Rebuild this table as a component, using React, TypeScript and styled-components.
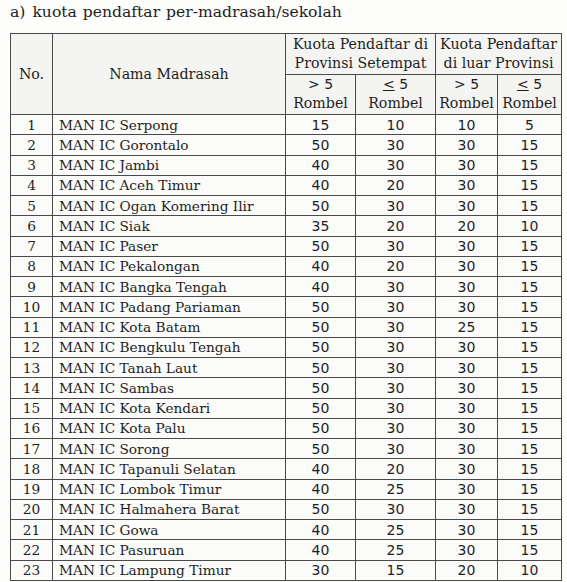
import { FC } from "react";
import styled, { createGlobalStyle } from "styled-components";

const GlobalStyle = createGlobalStyle`
  html, body {
    margin: 0;
    padding: 0;
    background: #fdfdfc;
  }
`;

const Page = styled.div`
  width: 567px;
  height: 582px;
  padding: 3px 0 0 10px;
  box-sizing: border-box;
  font-family: "DejaVu Serif", "Liberation Serif", serif;
  color: #1e1e1e;
`;

const Title = styled.div`
  font-family: "DejaVu Serif", "Liberation Serif", serif;
  font-size: 15.6px;
  line-height: 18px;
  height: 30px;
  word-spacing: 1px;
`;

const Label = styled.span`
  margin-right: 7px;
`;

const Table = styled.table`
  border-collapse: collapse;
  table-layout: fixed;
  width: 551px;
  font-size: 13.7px;
  background: #fbfbfa;
`;

const Cell = styled.td<{ $align?: "left" | "center"; $num?: boolean }>`
  border: 1.3px solid #4a4a4a;
  padding: ${(p) => (p.$align === "left" ? "0 0 0 6px" : "0")};
  text-align: ${(p) => p.$align || "center"};
  font-family: ${(p) =>
    p.$num ? '"DejaVu Sans", "Liberation Sans", sans-serif' : "inherit"};
  font-size: ${(p) => (p.$num ? "14px" : "inherit")};
  white-space: nowrap;
  overflow: hidden;
  line-height: 18px;
`;

const HeadCell = styled.th<{ $tall?: boolean }>`
  border: 1.3px solid #4a4a4a;
  padding: 0;
  font-weight: normal;
  font-size: 14.2px;
  text-align: center;
  line-height: 19px;
  white-space: nowrap;
  background: #f4f4f2;
  height: ${(p) => (p.$tall ? "80px" : "39px")};
`;

const HeadRow = styled.tr`
  height: 40px;
`;

const BodyRow = styled.tr`
  height: 20.26px;
`;

const Le = styled.span`
  text-decoration: underline;
  text-underline-offset: 1px;
`;

const Sans = styled.span`
  font-family: "DejaVu Sans", "Liberation Sans", sans-serif;
  font-size: 14px;
`;

type Row = [string, number, number, number, number];

const rows: Row[] = [
  ["Serpong", 15, 10, 10, 5],
  ["Gorontalo", 50, 30, 30, 15],
  ["Jambi", 40, 30, 30, 15],
  ["Aceh Timur", 40, 20, 30, 15],
  ["Ogan Komering Ilir", 50, 30, 30, 15],
  ["Siak", 35, 20, 20, 10],
  ["Paser", 50, 30, 30, 15],
  ["Pekalongan", 40, 20, 30, 15],
  ["Bangka Tengah", 40, 30, 30, 15],
  ["Padang Pariaman", 50, 30, 30, 15],
  ["Kota Batam", 50, 30, 25, 15],
  ["Bengkulu Tengah", 50, 30, 30, 15],
  ["Tanah Laut", 50, 30, 30, 15],
  ["Sambas", 50, 30, 30, 15],
  ["Kota Kendari", 50, 30, 30, 15],
  ["Kota Palu", 50, 30, 30, 15],
  ["Sorong", 50, 30, 30, 15],
  ["Tapanuli Selatan", 40, 20, 30, 15],
  ["Lombok Timur", 40, 25, 30, 15],
  ["Halmahera Barat", 50, 30, 30, 15],
  ["Gowa", 40, 25, 30, 15],
  ["Pasuruan", 40, 25, 30, 15],
  ["Lampung Timur", 30, 15, 20, 10],
];

const colWidths = [42, 233, 70, 80, 62, 64];

const App: FC = () => {
  return (
    <Page>
      <GlobalStyle />
      <Title>
        <Label>a)</Label>kuota pendaftar per-madrasah/sekolah
      </Title>
      <Table>
        <colgroup>
          {colWidths.map((w, i) => (
            <col key={i} style={{ width: w }} />
          ))}
        </colgroup>
        <thead>
          <HeadRow>
            <HeadCell rowSpan={2} $tall>No.</HeadCell>
            <HeadCell rowSpan={2} $tall>Nama Madrasah</HeadCell>
            <HeadCell colSpan={2}>
              Kuota Pendaftar di
              <br />
              Provinsi Setempat
            </HeadCell>
            <HeadCell colSpan={2}>
              Kuota Pendaftar
              <br />
              di luar Provinsi
            </HeadCell>
          </HeadRow>
          <HeadRow>
            <HeadCell>
              <Sans>&gt; 5</Sans>
              <br />
              Rombel
            </HeadCell>
            <HeadCell>
              <Sans>
                <Le>&lt;</Le> 5
              </Sans>
              <br />
              Rombel
            </HeadCell>
            <HeadCell>
              <Sans>&gt; 5</Sans>
              <br />
              Rombel
            </HeadCell>
            <HeadCell>
              <Sans>
                <Le>&lt;</Le> 5
              </Sans>
              <br />
              Rombel
            </HeadCell>
          </HeadRow>
        </thead>
        <tbody>
          {rows.map(([name, a, b, c, d], i) => (
            <BodyRow key={name}>
              <Cell>{i + 1}</Cell>
              <Cell $align="left">MAN IC {name}</Cell>
              <Cell $num>{a}</Cell>
              <Cell $num>{b}</Cell>
              <Cell $num>{c}</Cell>
              <Cell $num>{d}</Cell>
            </BodyRow>
          ))}
        </tbody>
      </Table>
    </Page>
  );
};

export default App;
